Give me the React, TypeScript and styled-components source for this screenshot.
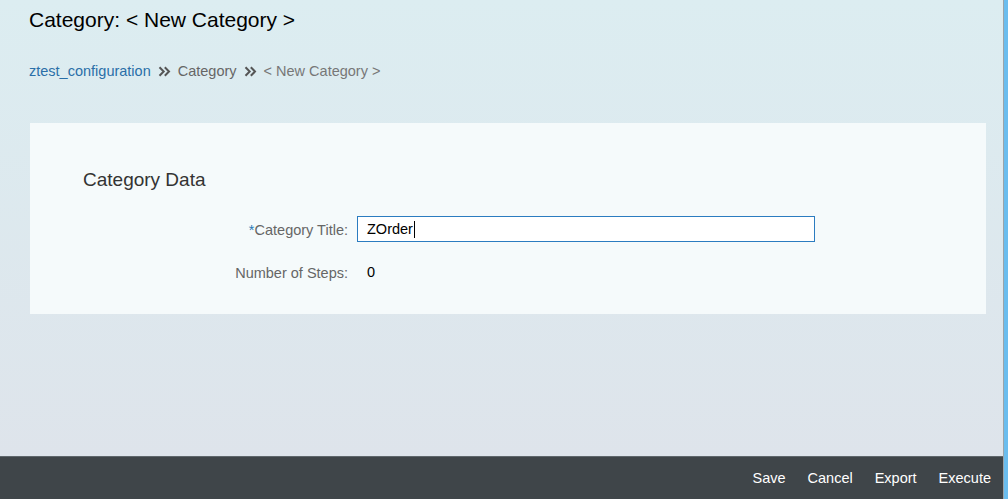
import React from "react";
import styled, { createGlobalStyle } from "styled-components";

const Global = createGlobalStyle`
  html, body { margin: 0; padding: 0; height: 100%; }
  body { font-family: Arial, "Liberation Sans", sans-serif; }
  #root { height: 100%; }
`;

const Shell = styled.div`
  display: flex;
  height: 499px;
  width: 1008px;
  overflow: hidden;
`;

const Main = styled.div`
  flex: 1;
  display: flex;
  flex-direction: column;
  min-width: 0;
`;

const SideBar = styled.div`
  width: 4px;
  background: #6bbdee;
  border-left: 1px solid #9aa4aa;
`;

const Content = styled.div`
  flex: 1;
  background: linear-gradient(#dcedf1, #dee4eb);
  padding: 8px 17px 0 29px;
`;

const Title = styled.h1`
  margin: 0;
  font-size: 21px;
  line-height: 24px;
  font-weight: normal;
  color: #000;
`;

const Breadcrumbs = styled.nav`
  display: flex;
  align-items: center;
  margin-top: 31px;
  font-size: 14.5px;
  line-height: 16px;
  gap: 7px;
`;

const Crumb = styled.span<{ $tone: "link" | "mid" | "current" }>`
  color: ${(p) => (p.$tone === "link" ? "#2a6fa8" : p.$tone === "mid" ? "#666" : "#777")};
`;

const Sep = styled.svg`
  width: 13px;
  height: 11px;
  flex: none;
  margin-top: 1px;
`;

const Card = styled.section`
  margin-top: 44px;
  margin-left: 1px;
  background: #f5fafb;
  padding: 46px 0 29px 0;
`;

const CardTitle = styled.h2`
  margin: 0 0 26px 53px;
  font-size: 19px;
  line-height: 21px;
  font-weight: normal;
  color: #333;
`;

const FormGrid = styled.div`
  display: grid;
  grid-template-columns: 318px 458px;
  column-gap: 9px;
  row-gap: 17px;
`;

const Label = styled.label`
  justify-self: end;
  align-self: center;
  padding-top: 2px;
  font-size: 14.5px;
  line-height: 16px;
  color: #666;
`;

const Req = styled.span`
  color: #2a7ab7;
`;

const InputBox = styled.div`
  box-sizing: border-box;
  height: 26px;
  border: 1px solid #2b7cc0;
  background: #fff;
  padding: 0 9px;
  display: flex;
  align-items: center;
  font-size: 14.5px;
  color: #000;
`;

const Caret = styled.span`
  display: inline-block;
  width: 1px;
  height: 17px;
  background: #000;
  margin-left: 1px;
`;

const Value = styled.div`
  height: 26px;
  display: flex;
  align-items: center;
  padding-left: 10px;
  font-size: 14.5px;
  color: #000;
`;

const Footer = styled.footer`
  height: 42px;
  border-top: 1px solid #5f676c;
  background: #3f4549;
  display: flex;
  justify-content: flex-end;
  align-items: center;
  padding-right: 1px;
`;

const FooterButton = styled.button`
  background: transparent;
  border: none;
  color: #fff;
  font-family: Arial, "Liberation Sans", sans-serif;
  font-size: 14.5px;
  padding: 0 11px;
  height: 100%;
  cursor: pointer;
`;

const Chevrons = () => (
  <Sep viewBox="0 0 13 11">
    <path d="M1.5 1.2l4.2 4.3-4.2 4.3M6.8 1.2l4.2 4.3-4.2 4.3" fill="none" stroke="#555" strokeWidth="2" />
  </Sep>
);

export default function App() {
  return (
    <>
      <Global />
      <Shell>
        <Main>
          <Content>
            <Title>Category: &lt; New Category &gt;</Title>
            <Breadcrumbs>
              <Crumb $tone="link">ztest_configuration</Crumb>
              <Chevrons />
              <Crumb $tone="mid">Category</Crumb>
              <Chevrons />
              <Crumb $tone="current">&lt; New Category &gt;</Crumb>
            </Breadcrumbs>
            <Card>
              <CardTitle>Category Data</CardTitle>
              <FormGrid>
                <Label>
                  <Req>*</Req>Category Title:
                </Label>
                <InputBox>
                  ZOrder
                  <Caret />
                </InputBox>
                <Label>Number of Steps:</Label>
                <Value>0</Value>
              </FormGrid>
            </Card>
          </Content>
          <Footer>
            <FooterButton>Save</FooterButton>
            <FooterButton>Cancel</FooterButton>
            <FooterButton>Export</FooterButton>
            <FooterButton>Execute</FooterButton>
          </Footer>
        </Main>
        <SideBar />
      </Shell>
    </>
  );
}
